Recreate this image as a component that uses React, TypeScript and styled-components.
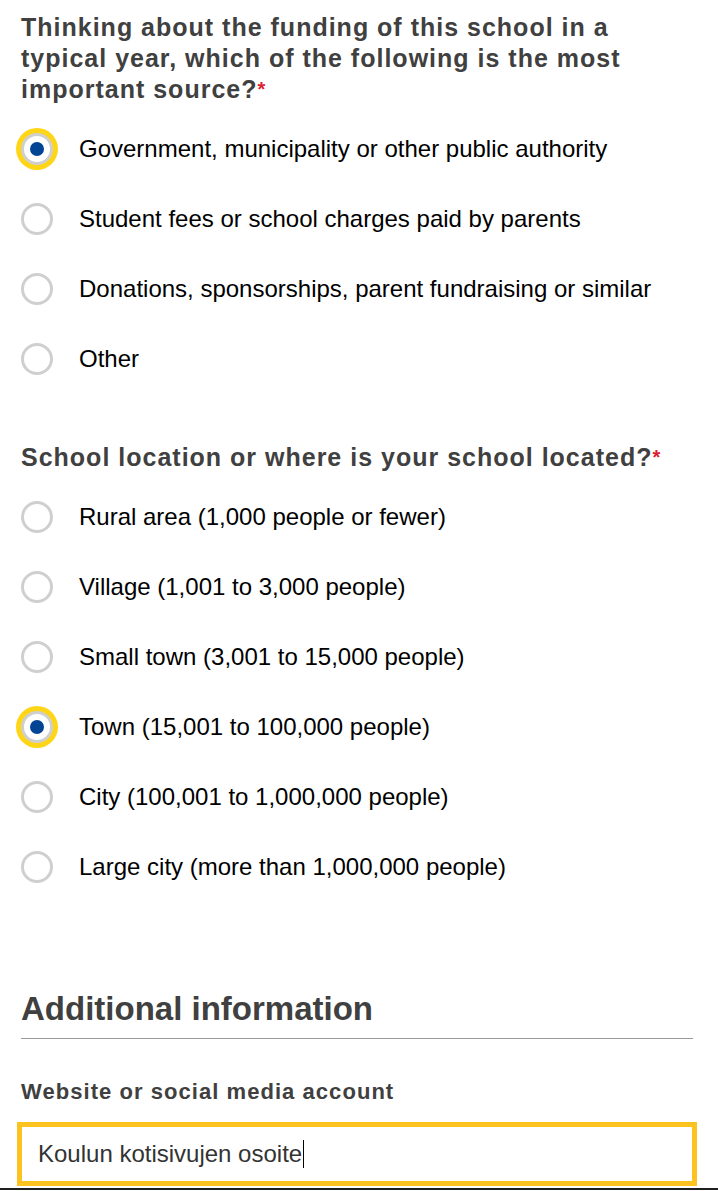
import React from "react";
import styled, { createGlobalStyle } from "styled-components";

const GlobalStyle = createGlobalStyle`
  body {
    margin: 0;
    background: #fff;
    font-family: "Liberation Sans", Arial, sans-serif;
  }
`;

const Page = styled.div`
  padding: 12px 25px 0 21px;
  color: #000;
`;

const Question = styled.fieldset`
  border: 0;
  margin: 0 0 48px;
  padding: 0;
`;

const Legend = styled.legend`
  padding: 0;
  font-size: 25px;
  letter-spacing: 1px;
  font-weight: 700;
  line-height: 31px;
  color: #404040;
  margin-bottom: 9px;
`;

const Required = styled.span`
  color: #da2131;
  font-size: 20px;
  vertical-align: top;
`;

const OptionRow = styled.label`
  display: flex;
  align-items: center;
  height: 70px;
  gap: 26px;
  font-size: 24px;
  color: #000;
  cursor: pointer;
`;

const Radio = styled.span<{ $checked?: boolean }>`
  position: relative;
  flex: none;
  width: 32px;
  height: 32px;
  box-sizing: border-box;
  border-radius: 50%;
  border: 3px solid #cfcfcf;
  background: #fff;
  box-shadow: ${(p) => (p.$checked ? "0 0 0 5px #ffd617" : "none")};

  &::after {
    content: "";
    display: ${(p) => (p.$checked ? "block" : "none")};
    position: absolute;
    left: 50%;
    top: 50%;
    width: 14px;
    height: 14px;
    margin: -7px 0 0 -7px;
    border-radius: 50%;
    background: #004494;
  }
`;

const SectionTitle = styled.h2`
  margin: 88px 0 0;
  padding-bottom: 10px;
  font-size: 33px;
  line-height: 38px;
  font-weight: 700;
  color: #404040;
  border-bottom: 1px solid #9a9a9a;
`;

const FieldLabel = styled.div`
  margin-top: 41px;
  font-size: 22px;
  letter-spacing: 1.05px;
  font-weight: 700;
  color: #404040;
  line-height: 24px;
`;

const TextBox = styled.div`
  margin: 18px 0 0 -4px;
  width: 680px;
  height: 64px;
  box-sizing: border-box;
  border: 5px solid #fcc21f;
  padding: 0 16px;
  display: flex;
  align-items: center;
  font-size: 24px;
  color: #333;
`;

const Caret = styled.span`
  display: inline-block;
  width: 1px;
  height: 28px;
  background: #000;
  margin-left: 1px;
`;

const BottomEdge = styled.div`
  height: 2px;
  margin: 2px -25px 0 -21px;
  background: #1f1f1f;
`;

type Q = { title: string; options: string[]; selected: number };

const questions: Q[] = [
  {
    title:
      "Thinking about the funding of this school in a typical year, which of the following is the most important source?",
    options: [
      "Government, municipality or other public authority",
      "Student fees or school charges paid by parents",
      "Donations, sponsorships, parent fundraising or similar",
      "Other",
    ],
    selected: 0,
  },
  {
    title: "School location or where is your school located?",
    options: [
      "Rural area (1,000 people or fewer)",
      "Village (1,001 to 3,000 people)",
      "Small town (3,001 to 15,000 people)",
      "Town (15,001 to 100,000 people)",
      "City (100,001 to 1,000,000 people)",
      "Large city (more than 1,000,000 people)",
    ],
    selected: 3,
  },
];

const App: React.FunctionComponent = () => {
  return (
    <Page>
      <GlobalStyle />
      {questions.map((q, qi) => (
        <Question key={qi}>
          <Legend>
            {q.title}
            <Required>*</Required>
          </Legend>
          {q.options.map((opt, i) => (
            <OptionRow key={opt}>
              <Radio $checked={i === q.selected} />
              {opt}
            </OptionRow>
          ))}
        </Question>
      ))}
      <SectionTitle>Additional information</SectionTitle>
      <FieldLabel>Website or social media account</FieldLabel>
      <TextBox>
        Koulun kotisivujen osoite
        <Caret />
      </TextBox>
      <BottomEdge />
    </Page>
  );
};

export default App;
